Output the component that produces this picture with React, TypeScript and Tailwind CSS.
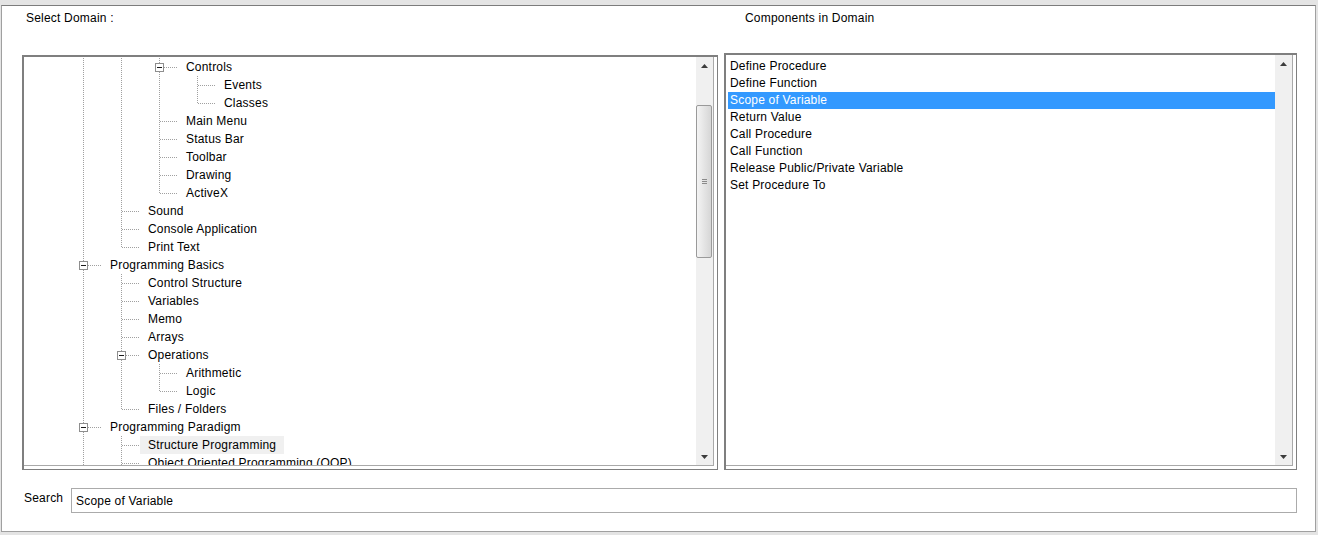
import React from 'react';

type TreeRow = { level: number; text: string; box?: boolean; sel?: boolean };

const treeRows: TreeRow[] = [
  { level: 3, text: 'Controls', box: true },
  { level: 4, text: 'Events' },
  { level: 4, text: 'Classes' },
  { level: 3, text: 'Main Menu' },
  { level: 3, text: 'Status Bar' },
  { level: 3, text: 'Toolbar' },
  { level: 3, text: 'Drawing' },
  { level: 3, text: 'ActiveX' },
  { level: 2, text: 'Sound' },
  { level: 2, text: 'Console Application' },
  { level: 2, text: 'Print Text' },
  { level: 1, text: 'Programming Basics', box: true },
  { level: 2, text: 'Control Structure' },
  { level: 2, text: 'Variables' },
  { level: 2, text: 'Memo' },
  { level: 2, text: 'Arrays' },
  { level: 2, text: 'Operations', box: true },
  { level: 3, text: 'Arithmetic' },
  { level: 3, text: 'Logic' },
  { level: 2, text: 'Files / Folders' },
  { level: 1, text: 'Programming Paradigm', box: true },
  { level: 2, text: 'Structure Programming', sel: true },
  { level: 2, text: 'Object Oriented Programming (OOP)' },
];

const components = [
  'Define Procedure',
  'Define Function',
  'Scope of Variable',
  'Return Value',
  'Call Procedure',
  'Call Function',
  'Release Public/Private Variable',
  'Set Procedure To',
];

// does the branch at `level` go on below row i?
const goesOn = (i: number, level: number) => {
  for (let j = i + 1; j < treeRows.length; j++) {
    if (treeRows[j].level < level) return false;
    if (treeRows[j].level === level) return true;
  }
  return true;
};

const LINE = '#a0a0a0';

const GuideCell = ({ own, down, box }: { own: boolean; down: boolean; box?: boolean }) => (
  <svg width="38" height="18" className="shrink-0" shapeRendering="crispEdges">
    {own ? (
      <>
        <line x1="19.5" y1="0" x2="19.5" y2={down ? 18 : 10} stroke={LINE} strokeDasharray="1 1" />
        <line x1="20" y1="9.5" x2="38" y2="9.5" stroke={LINE} strokeDasharray="1 1" />
        {box && (
          <>
            <rect x="15.5" y="5.5" width="8" height="8" fill="#fff" stroke="#8e8e8e" />
            <line x1="17" y1="9.5" x2="22" y2="9.5" stroke="#1a1a1a" />
          </>
        )}
      </>
    ) : (
      down && <line x1="19.5" y1="0" x2="19.5" y2="18" stroke={LINE} strokeDasharray="1 1" />
    )}
  </svg>
);

const Arrow = ({ up }: { up?: boolean }) => (
  <div className="h-[17px] flex items-center justify-center">
    <svg width="7" height="4">
      <polygon points={up ? '3.5,0 7,4 0,4' : '0,0 7,0 3.5,4'} fill="#3c3c3c" />
    </svg>
  </div>
);

const App: React.FC = () => {
  return (
    <div className="w-[1318px] h-[535px] bg-[#e4e4e4] pt-[5px] pl-px pr-[2px] font-['Liberation_Sans',Arial,sans-serif] text-[12px] tracking-[0.2px] text-black">
      <div className="h-[527px] bg-white border border-[#a0a0a0] border-t-[#7c7c7c] flex flex-col">
        {/* labels */}
        <div className="flex mt-[5px] h-[14px] leading-[14px] pl-[24px]">
          <span className="w-[719px]">Select Domain :</span>
          <span>Components in Domain</span>
        </div>

        <div className="flex items-end gap-[6px] pl-[20px] mt-[28px]">
          {/* domain tree */}
          <div className="w-[696px] h-[415px] border-t-2 border-l-2 border-r border-b border-[#7f7f7f] bg-white pr-[3px] pb-[3px] flex">
            <div className="flex-1 border-r border-b border-[#a9a9a9] flex overflow-hidden">
              <div className="flex-1 overflow-hidden pt-px pl-[40px]">
                {treeRows.map((r, i) => (
                  <div key={i} className="flex h-[18px]">
                    {Array.from({ length: r.level }, (_, k) => {
                      const c = k + 1;
                      return (
                        <GuideCell
                          key={c}
                          own={c === r.level}
                          down={goesOn(i, c)}
                          box={c === r.level ? r.box : false}
                        />
                      );
                    })}
                    <span className={`px-2 leading-[18px] whitespace-nowrap ${r.sel ? 'bg-[#f0f0f0]' : ''}`}>
                      {r.text}
                    </span>
                  </div>
                ))}
              </div>
              <div className="w-[17px] bg-[#f0f0f0] flex flex-col shrink-0">
                <Arrow up />
                <div className="h-[31px]" />
                <div className="h-[153px] mr-px rounded-[2px] border border-[#9a9a9a] bg-linear-to-r from-[#f4f4f4] to-[#d6d6d6] flex flex-col items-center justify-center gap-px">
                  <div className="w-[5px] h-px bg-[#8a8a8a]" />
                  <div className="w-[5px] h-px bg-[#8a8a8a]" />
                  <div className="w-[5px] h-px bg-[#8a8a8a]" />
                </div>
                <div className="flex-1" />
                <Arrow />
              </div>
            </div>
          </div>

          {/* components list */}
          <div className="w-[573px] h-[417px] border-t-2 border-l-2 border-r border-b border-[#7f7f7f] bg-white pr-[3px] pb-[3px] flex">
            <div className="flex-1 border-r border-b border-[#a9a9a9] flex overflow-hidden">
              <div className="flex-1 pt-[3px] pl-[2px]">
                {components.map((c) => (
                  <div
                    key={c}
                    className={`h-[17px] leading-[17px] pl-[2px] whitespace-nowrap ${
                      c === 'Scope of Variable' ? 'bg-[#3399ff] text-white' : ''
                    }`}
                  >
                    {c}
                  </div>
                ))}
              </div>
              <div className="w-[17px] bg-[#f0f0f0] flex flex-col justify-between shrink-0">
                <Arrow up />
                <Arrow />
              </div>
            </div>
          </div>
        </div>

        {/* search */}
        <div className="flex items-start pl-[20px] mt-[18px]">
          <span className="w-[49px] pl-[2px] mt-[3px] leading-[14px]">Search</span>
          <div className="w-[1226px] h-[25px] border border-[#ababab] pl-[4px] flex items-center">
            Scope of Variable
          </div>
        </div>
      </div>
    </div>
  );
};

export default App;
